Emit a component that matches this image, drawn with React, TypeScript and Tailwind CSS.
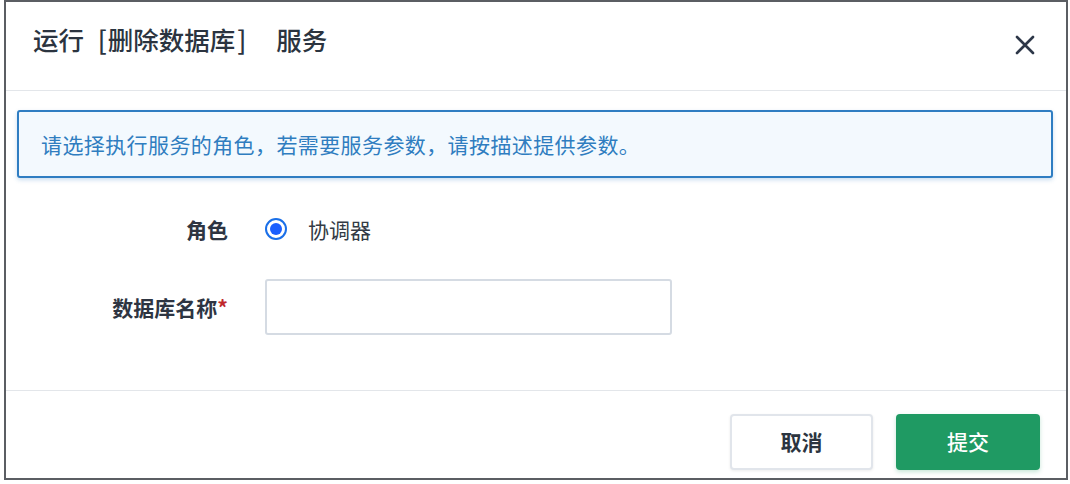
import React from "react";

export default function App() {
  const font = { fontFamily: '"Noto Sans CJK SC", "Noto Sans", sans-serif' };
  return (
    <div className="w-[1070px] h-[484px] bg-white" style={font}>
      <div className="ml-[4px] w-[1064px] h-[480px] border-2 border-[#5b5e63] flex flex-col bg-white">
        {/* Header */}
        <div className="h-[89px] border-b border-[#e3e6ea] flex items-start justify-between pl-[27px] pr-[31px] pt-[19px] shrink-0">
          <div className="text-[25.5px] leading-[36px] font-medium text-[#2b3440] whitespace-pre">
            <span>运行 </span>
            <span className="ml-[8px]">[</span>
            <span className="ml-[1px]">删除数据库</span>
            <span className="ml-[2px]">]</span>
            <span className="ml-[24px]"> 服务</span>
          </div>
          <button className="mt-[14px] w-[20px] h-[20px] flex items-center justify-center">
            <svg width="20" height="20" viewBox="0 0 20 20" fill="none">
              <path d="M2 2 L18 18 M18 2 L2 18" stroke="#2d3748" strokeWidth="2.6" strokeLinecap="round" />
            </svg>
          </button>
        </div>

        {/* Alert */}
        <div className="ml-[11px] mr-[13px] mt-[19px] h-[68px] border-2 border-[#2f7dc2] rounded-[3px] bg-[#f3f9fe] shadow-[0_2px_4px_rgba(47,125,194,0.25)] flex items-center pl-[22px]">
          <span className="text-[21px] leading-[30px] tracking-[0.4px] text-[#2f7dc0]">请选择执行服务的角色，若需要服务参数，请按描述提供参数。</span>
        </div>

        {/* Form */}
        <div className="flex-1 flex flex-col">
          <div className="mt-[29px] h-[44px] flex items-center">
            <div className="w-[222px] text-right text-[21px] leading-[30px] font-semibold text-[#2e3542]">角色</div>
            <div className="ml-[37px] flex items-center">
              <span className="w-[22px] h-[22px] rounded-full border-2 border-[#1a6fe8] flex items-center justify-center">
                <span className="w-[12px] h-[12px] rounded-full bg-[#1b5ffe]" />
              </span>
              <span className="ml-[21px] text-[21px] leading-[30px] text-[#333a44]">协调器</span>
            </div>
          </div>
          <div className="mt-[28px] h-[56px] flex items-center">
            <div className="w-[222px] text-right text-[21px] leading-[30px] font-semibold text-[#2e3542]">
              数据库名称<span className="text-[#c0282d]">*</span>
            </div>
            <div className="ml-[37px] w-[407px] h-[56px] border-2 border-[#d5dbe3] rounded-[3px] bg-white" />
          </div>
        </div>

        {/* Footer */}
        <div className="h-[88px] border-t border-[#e3e6ea] flex items-start justify-end gap-[23px] pr-[26px] pt-[23px] shrink-0">
          <button className="w-[143px] h-[56px] rounded-[4px] border-2 border-[#e1e5eb] bg-white shadow-[0_1px_3px_rgba(0,0,0,0.08)] text-[21px] font-semibold text-[#2b3440]">
            取消
          </button>
          <button className="w-[144px] h-[56px] rounded-[4px] bg-[#1f9a63] shadow-[0_2px_4px_rgba(31,154,99,0.25)] text-[21px] font-medium text-white">
            提交
          </button>
        </div>
      </div>
    </div>
  );
}
